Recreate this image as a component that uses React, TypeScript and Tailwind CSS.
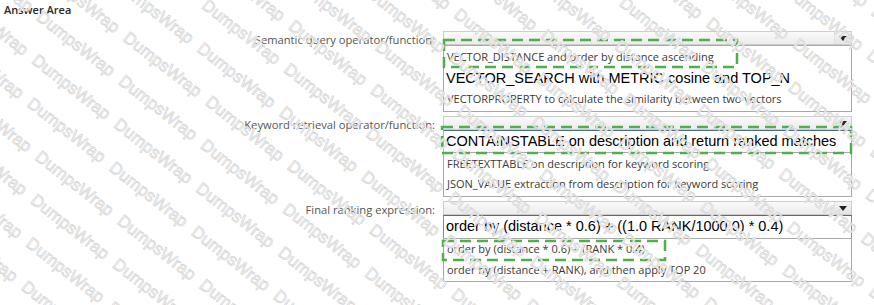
import React from "react";

const GREEN = "#52ad4c";

function DashBox({ x, y, w, h }: { x: number; y: number; w: number; h: number }) {
  return (
    <svg
      className="pointer-events-none absolute z-10"
      style={{ left: x - 2, top: y - 2, width: w + 4, height: h + 4 }}
      viewBox={`0 0 ${w + 4} ${h + 4}`}
    >
      <rect x={2} y={2} width={w} height={h} fill="none" stroke={GREEN} strokeWidth={2.5} strokeDasharray="11 6" />
    </svg>
  );
}

function SelectBar() {
  return (
    <div className="flex h-[14px] border border-[#cdcdcd] bg-gradient-to-b from-[#fafafa] to-[#ececec]">
      <div className="flex-1" />
      <div className="flex w-[17px] items-center justify-center border-l border-[#e2e2e2] bg-gradient-to-b from-[#f4f4f4] to-[#e4e4e4]">
        <svg width="8" height="5" viewBox="0 0 8 5">
          <path d="M0 0 L8 0 L4 5 Z" fill="#222" />
        </svg>
      </div>
    </div>
  );
}

const small = "font-['Open_Sans',sans-serif] text-[11px] text-[#3a3a3a] pl-[3px] flex items-center whitespace-nowrap";
const big = "font-['Liberation_Sans',Arial,sans-serif] text-[14.5px] text-black pl-[2px] flex items-center whitespace-nowrap";

function Label({ children }: { children: React.ReactNode }) {
  return (
    <div className="w-[443px] shrink-0 pr-[8px] pt-[2px] text-right font-['Open_Sans',sans-serif] text-[11.2px] leading-[14px] text-[#555]">
      {children}
    </div>
  );
}

function Watermark() {
  const rows = Array.from({ length: 48 });
  return (
    <div className="pointer-events-none absolute inset-0 z-20 overflow-hidden">
      <div className="absolute left-[-500px] top-[-760px] flex h-[1800px] w-[1900px] rotate-[38deg] flex-col">
        {rows.map((_, i) => (
          <div
            key={i}
            className="h-[37px] whitespace-nowrap font-['Liberation_Sans',Arial,sans-serif] text-[17px] leading-[37px] text-[#f3f3f3] [-webkit-text-stroke:0.6px_#d2d2d2]"
            style={{ paddingLeft: (i * 23) % 88 }}
          >
            {Array.from({ length: 26 }).map((__, j) => (
              <span key={j} className="mr-[10px]">DumpsWrap</span>
            ))}
          </div>
        ))}
      </div>
    </div>
  );
}

export default function App() {
  return (
    <div className="relative h-[305px] w-[874px] overflow-hidden bg-white">
      <div className="pl-[4px] pt-[2px] font-['Open_Sans',sans-serif] text-[11px] font-semibold leading-[16px] text-[#2a2a2a]">
        Answer Area
      </div>
      <div className="mt-[13px] flex flex-col gap-[4px]">
        {/* Group 1 */}
        <div className="flex h-[81px]">
          <Label>Semantic query operator/function:</Label>
          <div className="relative w-[409px]">
            <SelectBar />
            <div className="flex h-[67px] flex-col border border-[#a9a9a9] bg-white">
              <div className={`${small} h-[22px]`}>VECTOR_DISTANCE and order by distance ascending</div>
              <div className={`${big} h-[22px]`}>VECTOR_SEARCH with METRIC cosine and TOP_N</div>
              <div className={`${small} h-[19px]`}>VECTORPROPERTY to calculate the similarity between two vectors</div>
            </div>
            <DashBox x={1} y={9} w={293} h={27} />
          </div>
        </div>
        {/* Group 2 */}
        <div className="flex h-[81px]">
          <Label>Keyword retrieval operator/function:</Label>
          <div className="relative w-[409px]">
            <SelectBar />
            <div className={`${big} h-[22px] border-x border-t border-x-[#b5b5b5] border-t-[#4a6a9c] bg-white`}>
              CONTAINSTABLE on description and return ranked matches
            </div>
            <div className="flex h-[45px] flex-col border border-[#a9a9a9] bg-white pt-[1px]">
              <div className={`${small} h-[20px]`}>FREETEXTTABLE on description for keyword scoring</div>
              <div className={`${small} h-[20px]`}>JSON_VALUE extraction from description for keyword scoring</div>
            </div>
            <DashBox x={-1} y={11} w={409} h={26} />
          </div>
        </div>
        {/* Group 3 */}
        <div className="flex h-[81px]">
          <Label>Final ranking expression:</Label>
          <div className="relative w-[409px]">
            <SelectBar />
            <div className={`${big} h-[23px] border-x border-t border-x-[#8a8a8a] border-t-[#4a6a9c] bg-white`}>
              order by (distance * 0.6) + ((1.0 RANK/1000.0) * 0.4)
            </div>
            <div className="flex h-[44px] flex-col border border-[#a9a9a9] bg-white">
              <div className={`${small} h-[21px]`}>order by (distance * 0.6) + (RANK * 0.4)</div>
              <div className={`${small} h-[21px]`}>order by (distance + RANK), and then apply TOP 20</div>
            </div>
            <DashBox x={0} y={40} w={222} h={19} />
          </div>
        </div>
      </div>
      <Watermark />
    </div>
  );
}
